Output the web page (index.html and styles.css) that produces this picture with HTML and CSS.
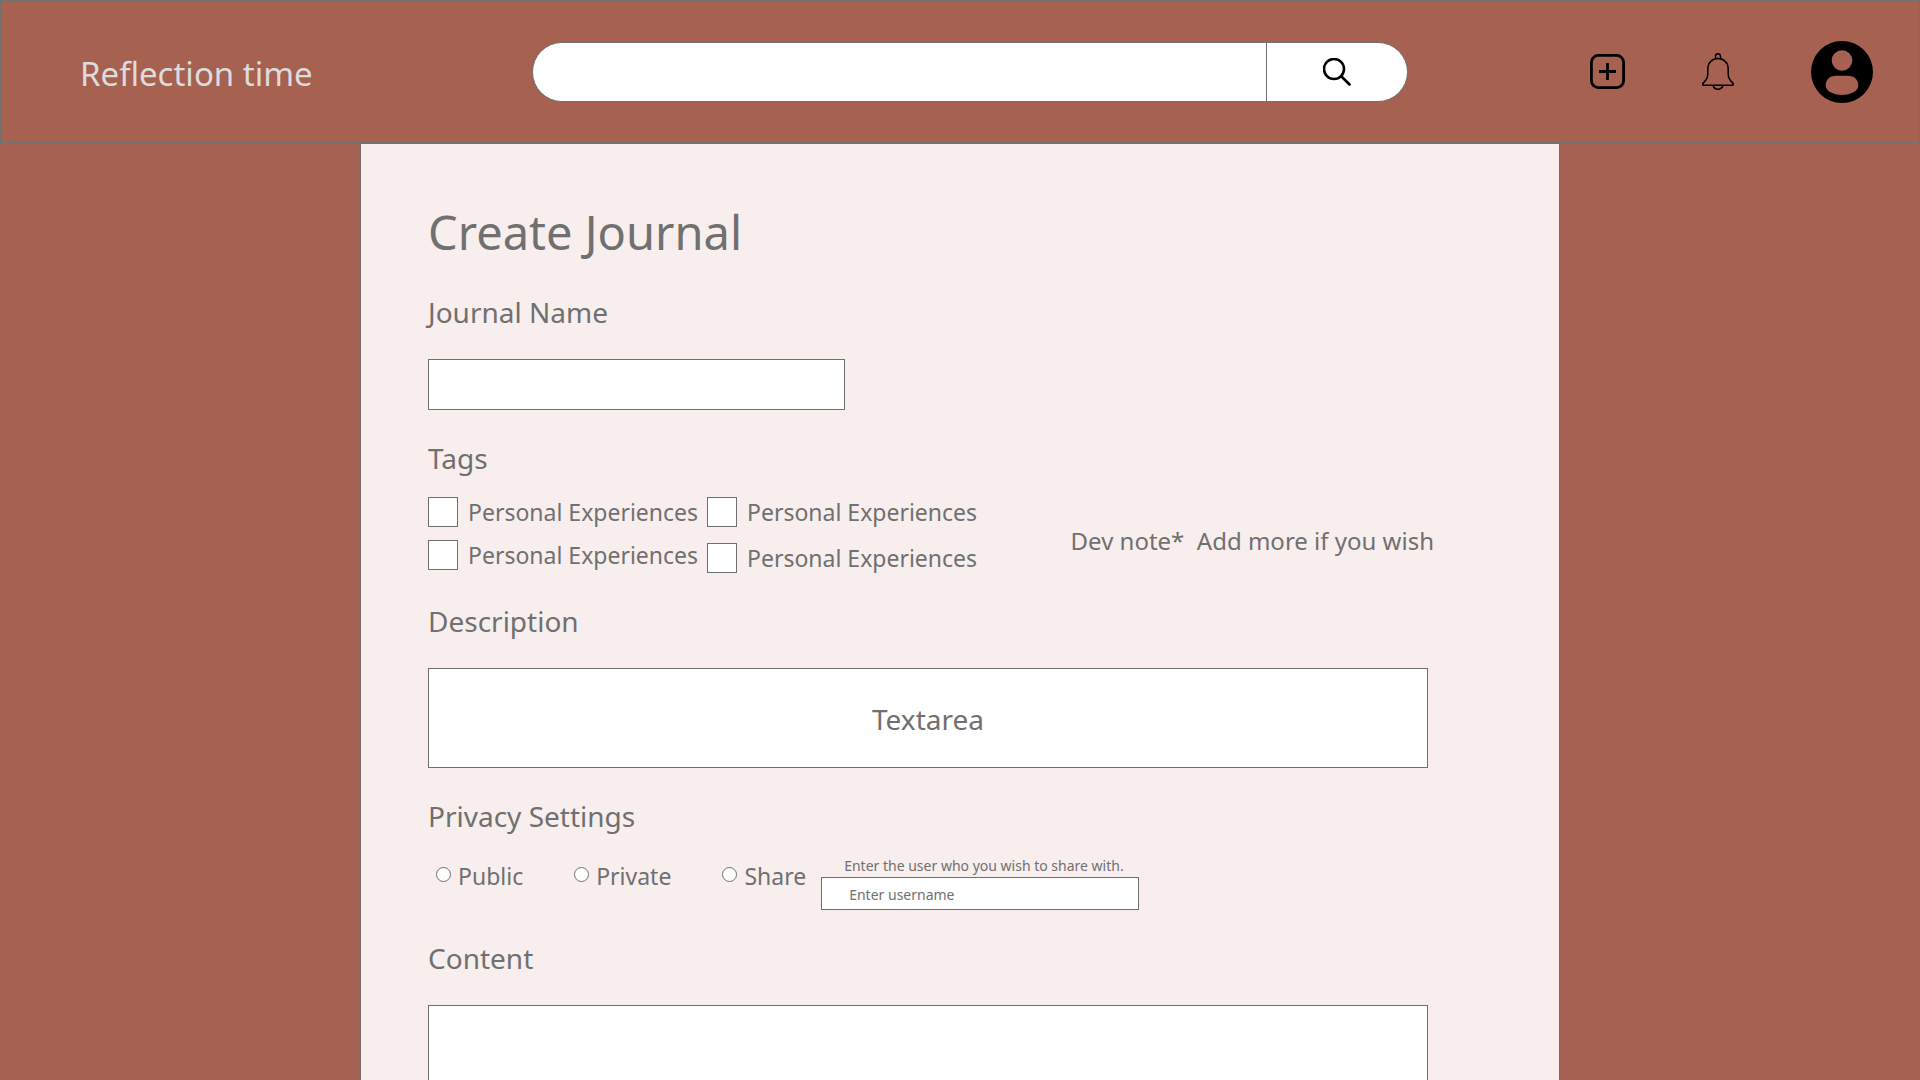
FILE: index.html
```html
<!DOCTYPE html>
<html lang="en">
<head>
  <meta charset="utf-8">
  <meta name="viewport" content="width=device-width, initial-scale=1">
  <title>Create Journal - Reflection time</title>
  <link rel="stylesheet" href="styles.css">
</head>
<body>
  <header class="topbar">
    <a class="brand" href="#">Reflection time</a>
    <form class="search" role="search">
      <input class="search-input" type="search" aria-label="Search">
      <button class="search-button" type="submit" aria-label="Search">
        <svg width="28" height="28" viewBox="0 0 28 28" fill="none" stroke="#000" stroke-width="2.600" stroke-linecap="round">
          <circle cx="11" cy="11" r="10"/>
          <path d="M18.500 18.500L26.500 26.500"/>
        </svg>
      </button>
    </form>
    <nav class="actions" aria-label="Account">
      <button class="icon-button" type="button" aria-label="New journal">
        <svg width="35" height="35" viewBox="0 0 35 35" fill="none" stroke="#000" stroke-width="2.800">
          <rect x="1.400" y="1.400" width="32.200" height="32.200" rx="7"/>
          <path d="M9 17.500H26M17.500 9V26"/>
        </svg>
      </button>
      <button class="icon-button" type="button" aria-label="Notifications">
        <svg width="32" height="38" viewBox="0 0 32 38" fill="none" stroke="#000" stroke-width="1.500" stroke-linejoin="round">
          <path d="M13.500 5.700V3.200a2.500 2.500 0 0 1 5 0V5.700"/>
          <path d="M16 5.600C10 5.600 5.800 9.800 5.800 15.500V21C5.800 25.500 3.600 28 1.400 29.900C.5 30.800.5 32.300 1.600 32.300H30.400C31.500 32.300 31.500 30.800 30.600 29.900C28.400 28 26.200 25.500 26.200 21V15.500C26.200 9.800 22 5.600 16 5.600Z"/>
          <path d="M11.200 32.500a4.900 4.700 0 0 0 9.600 0"/>
        </svg>
      </button>
      <button class="icon-button" type="button" aria-label="Profile">
        <svg width="62" height="62" viewBox="0 0 62 62" fill="#000" fill-rule="evenodd">
          <path d="M31 0a31 31 0 1 1 0 62a31 31 0 1 1 0-62ZM31 9.200a10.300 10.300 0 1 0 0 20.600a10.300 10.300 0 1 0 0-20.600ZM25 34.800C18.500 34.800 14.700 39 14.700 44.500C14.700 50 22 53.900 31 53.900S47.300 50 47.300 44.500C47.300 39 43.500 34.800 37 34.800Z"/>
        </svg>
      </button>
    </nav>
  </header>

  <main class="panel">
    <h1 class="title">Create Journal</h1>
    <form class="journal-form">
      <section class="field">
        <label class="field-label" for="journal-name">Journal Name</label>
        <input class="box name-input" id="journal-name" type="text">
      </section>

      <section class="field field-tight" role="group" aria-labelledby="tags-heading">
        <h2 class="field-label" id="tags-heading">Tags</h2>
        <div class="tags">
          <div class="tag-column">
            <label class="tag"><input class="tick" type="checkbox">Personal Experiences</label>
            <label class="tag"><input class="tick" type="checkbox">Personal Experiences</label>
          </div>
          <div class="tag-column tag-column-loose">
            <label class="tag"><input class="tick" type="checkbox">Personal Experiences</label>
            <label class="tag"><input class="tick" type="checkbox">Personal Experiences</label>
          </div>
          <p class="note">Dev note*&nbsp; Add more if you wish</p>
        </div>
      </section>

      <section class="field">
        <label class="field-label" for="description">Description</label>
        <textarea class="box description" id="description" placeholder="Textarea"></textarea>
      </section>

      <section class="field field-tight" role="radiogroup" aria-labelledby="privacy-heading">
        <h2 class="field-label" id="privacy-heading">Privacy Settings</h2>
        <div class="privacy">
          <div class="choices">
            <label class="choice"><input class="dot" type="radio" name="privacy">Public</label>
            <label class="choice"><input class="dot" type="radio" name="privacy">Private</label>
            <label class="choice"><input class="dot" type="radio" name="privacy">Share</label>
          </div>
          <div class="share">
            <label class="share-label" for="username">Enter the user who you wish to share with.</label>
            <input class="box share-input" id="username" type="text" placeholder="Enter username">
          </div>
        </div>
      </section>

      <section class="field">
        <label class="field-label" for="content">Content</label>
        <textarea class="box content" id="content"></textarea>
      </section>
    </form>
  </main>
</body>
</html>
```
FILE: styles.css
```css
:root {
  --clay: #a66150;
  --paper: #f7eeed;
  --ink: #707070;
}

* {
  box-sizing: border-box;
}

body {
  margin: 0;
  background: var(--clay);
  color: var(--ink);
  font-family: "Noto Sans", sans-serif;
  font-size: 23px;
  line-height: 30px;
}

input,
textarea,
button {
  margin: 0;
  font: inherit;
  color: inherit;
}

/* Top bar */

.topbar {
  display: grid;
  grid-template-columns: 452px minmax(0, 1fr) 465px;
  align-items: center;
  height: 143px;
  padding: 0 46px 0 79px;
  border: 1px solid var(--ink);
}

.brand {
  padding-top: 4px;
  color: #dcdcdc;
  font-size: 33px;
  line-height: 48px;
  text-decoration: none;
}

.search {
  display: flex;
  height: 60px;
  overflow: hidden;
  background: #fff;
  border: 1px solid var(--ink);
  border-radius: 30px;
}

.search-input {
  flex: 1;
  min-width: 0;
  padding: 0 28px;
  background: none;
  border: 0;
}

.search-button {
  display: flex;
  align-items: center;
  justify-content: center;
  width: 141px;
  padding: 0;
  background: none;
  border: 0;
  border-left: 1px solid var(--ink);
}

.actions {
  display: flex;
  align-items: center;
  justify-content: flex-end;
  gap: 77px;
}

.icon-button {
  display: flex;
  padding: 0;
  background: none;
  border: 0;
}

/* Journal form */

.panel {
  max-width: 1200px;
  margin: 0 auto;
  padding: 56px 131px 54px 67px;
  background: var(--paper);
  border: 1px solid var(--ink);
}

.title {
  margin: 0 0 28px;
  font-size: 47px;
  font-weight: 400;
  line-height: 64px;
}

.journal-form {
  display: flex;
  flex-direction: column;
  gap: 28px;
}

.field {
  display: flex;
  flex-direction: column;
  align-items: flex-start;
  gap: 27px;
}

.field-tight {
  gap: 19px;
}

.field-label {
  margin: 0;
  font-size: 28px;
  font-weight: 400;
  line-height: 40px;
}

.box {
  background: #fff;
  border: 1px solid var(--ink);
  border-radius: 0;
}

.box::placeholder {
  color: var(--ink);
  opacity: 1;
}

.name-input {
  width: 100%;
  max-width: 417px;
  height: 51px;
  padding: 0 12px;
}

.tags {
  display: flex;
  align-items: flex-start;
  width: 100%;
}

.tag-column {
  display: flex;
  flex-direction: column;
  gap: 13px;
  width: 279px;
}

.tag-column-loose {
  gap: 16px;
}

.tag {
  display: flex;
  align-items: center;
  gap: 10px;
  white-space: nowrap;
}

.tick {
  flex: none;
  width: 30px;
  height: 30px;
  appearance: none;
  background: #fff;
  border: 1px solid var(--ink);
}

.tick:checked {
  background: var(--ink);
}

.note {
  margin: 0 -6px 0 auto;
  padding-top: 29px;
  font-size: 24px;
  white-space: nowrap;
}

.description {
  display: block;
  width: 100%;
  height: 100px;
  padding: 30px 12px 0;
  font-size: 28px;
  line-height: 40px;
  text-align: center;
  resize: none;
}

.privacy {
  display: flex;
  align-items: flex-start;
  gap: 15px;
  padding-left: 8px;
}

.choices {
  display: flex;
  gap: 51px;
  padding-top: 6px;
}

.choice {
  display: flex;
  align-items: center;
  gap: 7px;
}

.dot {
  flex: none;
  width: 15px;
  height: 15px;
  margin-bottom: 3px;
  appearance: none;
  background: #fff;
  border: 1px solid var(--ink);
  border-radius: 50%;
}

.dot:checked {
  background: var(--ink);
}

.share {
  display: flex;
  flex-direction: column;
  font-size: 14px;
  line-height: 22px;
}

.share-label {
  padding-left: 23px;
}

.share-input {
  width: 318px;
  height: 33px;
  padding: 1px 27px 0;
}

.content {
  display: block;
  width: 100%;
  height: 320px;
  padding: 12px;
  resize: none;
}
```
